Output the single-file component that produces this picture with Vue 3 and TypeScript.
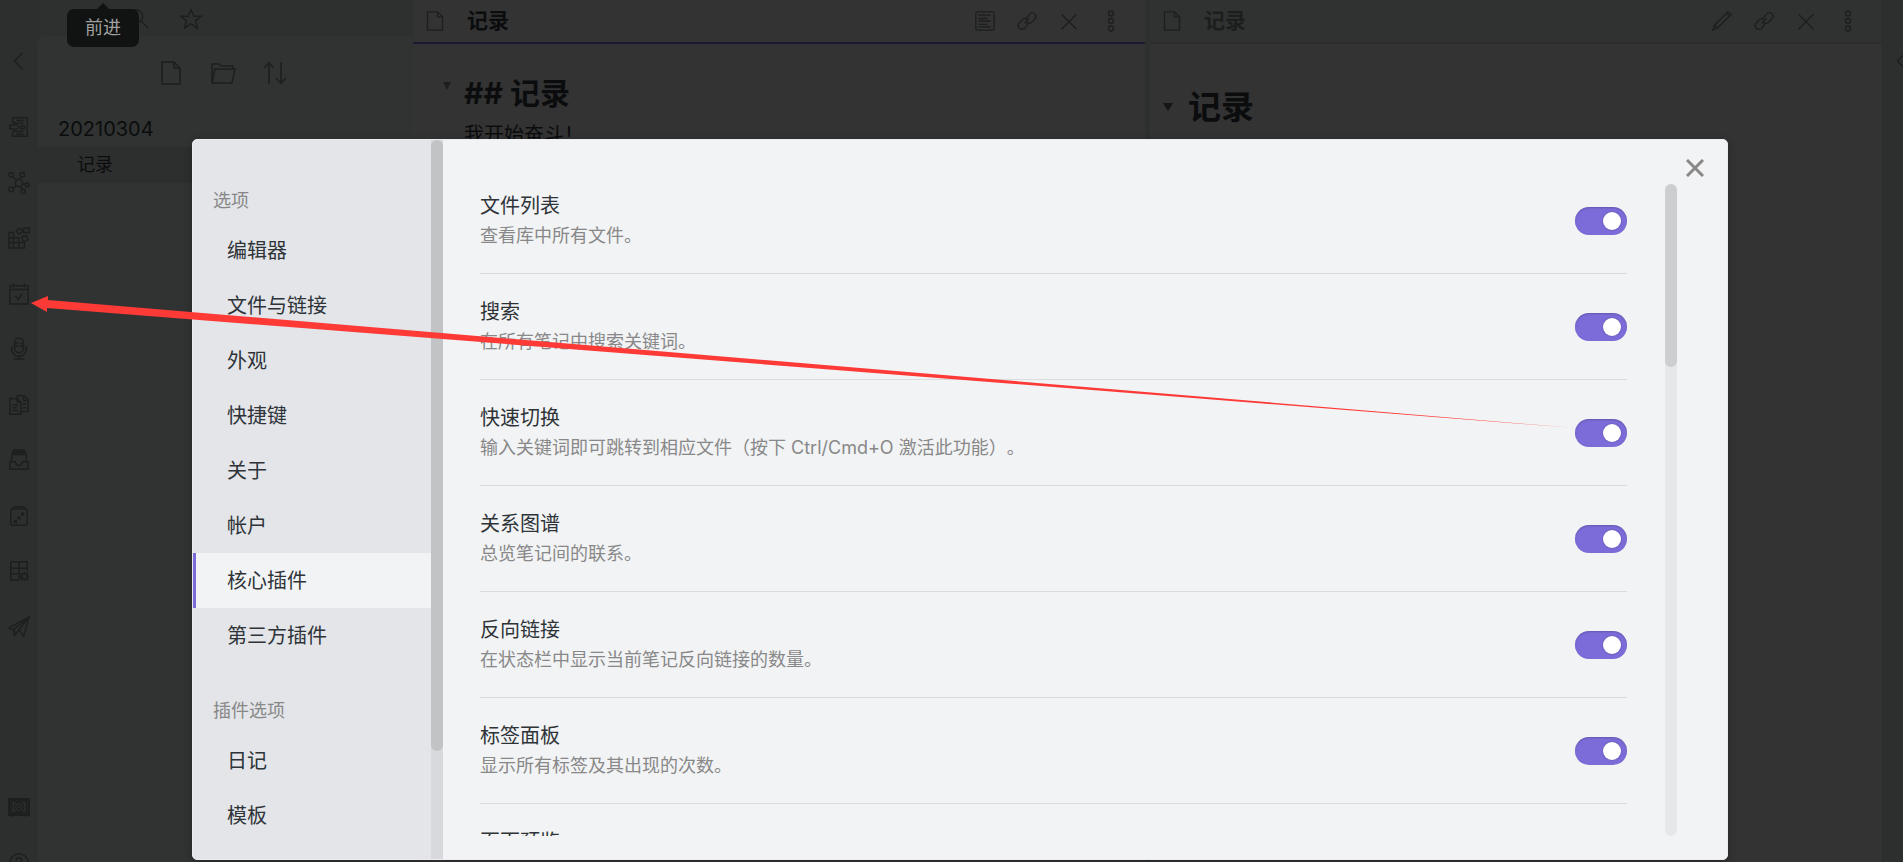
<script setup lang="ts">
import { ref } from 'vue'

interface Plugin {
  name: string
  desc: string
  on: boolean
}

const groups = [
  { title: '选项', items: ['编辑器', '文件与链接', '外观', '快捷键', '关于', '帐户', '核心插件', '第三方插件'] },
  { title: '插件选项', items: ['日记', '模板'] },
]
const current = ref('核心插件')

const plugins = ref<Plugin[]>([
  { name: '文件列表', desc: '查看库中所有文件。', on: true },
  { name: '搜索', desc: '在所有笔记中搜索关键词。', on: true },
  { name: '快速切换', desc: '输入关键词即可跳转到相应文件（按下 Ctrl/Cmd+O 激活此功能）。', on: true },
  { name: '关系图谱', desc: '总览笔记间的联系。', on: true },
  { name: '反向链接', desc: '在状态栏中显示当前笔记反向链接的数量。', on: true },
  { name: '标签面板', desc: '显示所有标签及其出现的次数。', on: true },
  { name: '页面预览', desc: '', on: true },
])

// Stroke outlines on a 24 × 24 grid
const icons: Record<string, string> = {
  back: 'M16 3L7 12l9 9',
  switcher: 'M5 8V2h16v20H5v-6M9 5h8M9 8h8M14 11h4v3h-4zM9 17h8M9 20h8M2 10h5V7l5 5-5 5v-3H2z',
  graph: 'M8 12a4 4 0 1 0 8 0 4 4 0 1 0-8 0M1 3a2 2 0 1 0 5 0 2 2 0 1 0-5 0M13 3a2 2 0 1 0 5 0 2 2 0 1 0-5 0M19 14a2 2 0 1 0 4 0 2 2 0 1 0-4 0M14 21a2 2 0 1 0 5 0 2 2 0 1 0-5 0M1 19a2 2 0 1 0 5 0 2 2 0 1 0-5 0M5 5l4 4M15 5l-2 3M16 13h3M14 16l2 3M9 15l-4 3',
  blocks: 'M1 6h5v17H1zM1 12h11v11M1 17h17v6H1M6 12v11M12 12v11M9 4l4-3 3 4-4 3zM17 1h6v5h-6zM15 11l5-2 2 5-5 2z',
  calendar: 'M2 3h20v20H2zM2 7h20M6 1v4M18 1v4M8 14l3 4 5-7M5 1h2M17 1h2',
  mic: 'M7 5a5 5 0 0 1 10 0v6a5 5 0 0 1-10 0zM4 9v3a8 8 0 0 0 16 0V9M12 20v3M6 23h12M7 6h4M7 9h4M13 6h4M13 9h4',
  copy: 'M2 5h8l4 4v13H2zM10 5v4h4M10 5V2h8l4 4v13h-8M17 2v5h5M5 12h6M5 15h5M5 18h6M16 11h4M16 15h4',
  inbox: 'M2 14h6q1 4 4 4t4-4h6v8H2zM4 14V6h16v8M5 6V3h14v3M5 1h14M5 4h14',
  dice: 'M3 6q0-2 2-2h14q2 0 2 2v14q0 2-2 2H5q-2 0-2-2zM4 5l3-3h10l3 3M15 9h2v2h-2zM11 13h2v2h-2zM7 17h2v2H7z',
  table: 'M3 2h18v10M12 22H3V2M3 9h18M3 15h11M12 2v20M15 18a3 3 0 1 0 6 0 3 3 0 1 0-6 0M18 13v2M18 21v2M13 18h2M21 18h2M14 14l2 2M20 20l2 2M22 14l-2 2M14 22l2-2',
  plane: 'M1 13L23 1l-6 21-5-7-5 6-1-6zM23 1L6 15M23 1L12 15M7 21v-5',
  vault: 'M1 3h22v18H1zM4 6h16v12H4zM7 12a5 5 0 1 0 10 0 5 5 0 1 0-10 0M10 12a2 2 0 1 0 4 0 2 2 0 1 0-4 0M4 21v2M20 21v2M2 4h20v16H2z',
  help: 'M2 12a10 10 0 1 0 20 0 10 10 0 1 0-20 0M9 9a3 3 0 1 1 4 3q-1 1-1 3M12 18v1',
  file: 'M3 1h12l6 6v16H3zM15 1v6h6',
  folder: 'M1 22V3h7l2 2h12v3M1 22L4 8h20l-3 14z',
  sort: 'M6 23V2M1 7l5-5 5 5M18 1v21M13 17l5 5 5-5',
  search: 'M2 9a7 7 0 1 0 14 0 7 7 0 1 0-14 0M14 14l8 8',
  star: 'M12 2l3 7h8l-6 5 2 8-7-5-7 5 2-8-6-5h8z',
  preview: 'M1 3q0-2 2-2h18q2 0 2 2v18q0 2-2 2H3q-2 0-2-2zM4 5h15M4 9h11M4 12h15M4 16h11M4 19h15',
  link: 'M10 10l5-6q3-4 7 0 2 3-1 6l-4 4q-3 2-6-1M14 14l-4 6q-4 4-8 0-2-3 1-6l4-4q3-2 6 1M9 15l6-6',
  cross: 'M3 4l18 18M21 4L3 22',
  dots: 'M9 3a3 3 0 1 0 6 0 3 3 0 1 0-6 0M9 12a3 3 0 1 0 6 0 3 3 0 1 0-6 0M9 21a3 3 0 1 0 6 0 3 3 0 1 0-6 0',
  pencil: 'M1 23l2-6L19 1l4 3L7 20zM3 17l4 3M18 3l3 3',
}
const ribbon = ['switcher', 'graph', 'blocks', 'calendar', 'mic', 'copy', 'inbox', 'dice', 'table', 'plane']
const leftActions = ['preview', 'link', 'cross', 'dots']
const rightActions = ['pencil', 'link', 'cross', 'dots']
</script>

<template>
  <div class="app">
    <nav class="ribbon" aria-label="功能区">
      <button class="icon collapse" aria-label="折叠"><svg viewBox="0 0 24 24"><path :d="icons.back" /></svg></button>
      <div class="ribbon-main">
        <button v-for="name in ribbon" :key="name" class="icon" :aria-label="name">
          <svg viewBox="0 0 24 24"><path :d="icons[name]" /></svg>
        </button>
      </div>
      <div class="ribbon-end">
        <button class="icon" aria-label="vault"><svg viewBox="0 0 24 24"><path :d="icons.vault" /></svg></button>
        <button class="icon" aria-label="help"><svg viewBox="0 0 24 24"><path :d="icons.help" /></svg></button>
      </div>
    </nav>

    <aside class="explorer">
      <div class="tabs">
        <button class="icon tab" aria-label="文件列表"><svg viewBox="0 0 24 24"><path :d="icons.folder" /></svg></button>
        <button class="icon tab" aria-label="搜索"><svg viewBox="0 0 24 24"><path :d="icons.search" /></svg></button>
        <button class="icon tab" aria-label="星标"><svg viewBox="0 0 24 24"><path :d="icons.star" /></svg></button>
        <div class="tooltip" role="tooltip">前进</div>
      </div>
      <div class="files">
        <div class="tools">
          <button class="icon" aria-label="新建笔记"><svg viewBox="0 0 24 24"><path :d="icons.file" /></svg></button>
          <button class="icon" aria-label="新建文件夹"><svg viewBox="0 0 24 24"><path :d="icons.folder" /></svg></button>
          <button class="icon" aria-label="排序"><svg viewBox="0 0 24 24"><path :d="icons.sort" /></svg></button>
        </div>
        <a class="entry" href="#">20210304</a>
        <a class="entry active" href="#">记录</a>
      </div>
    </aside>

    <section class="pane focused">
      <header>
        <svg class="glyph" viewBox="0 0 24 24"><path :d="icons.file" /></svg>
        <span class="name">记录</span>
        <button v-for="name in leftActions" :key="name" class="icon" :aria-label="name">
          <svg viewBox="0 0 24 24"><path :d="icons[name]" /></svg>
        </button>
      </header>
      <div class="doc source">
        <h2><span class="fold"></span>## 记录</h2>
        <p>我开始奋斗！</p>
      </div>
    </section>

    <section class="pane">
      <header>
        <svg class="glyph" viewBox="0 0 24 24"><path :d="icons.file" /></svg>
        <span class="name">记录</span>
        <button v-for="name in rightActions" :key="name" class="icon" :aria-label="name">
          <svg viewBox="0 0 24 24"><path :d="icons[name]" /></svg>
        </button>
      </header>
      <div class="doc reading">
        <h2><span class="fold"></span>记录</h2>
      </div>
    </section>

    <div class="ribbon right">
      <button class="icon collapse" aria-label="展开"><svg viewBox="0 0 24 24"><path :d="icons.back" /></svg></button>
    </div>

    <div class="overlay">
      <div class="modal" role="dialog" aria-label="设置">
        <div class="menu">
          <nav>
            <div v-for="g in groups" :key="g.title" class="group">
              <div class="group-title">{{ g.title }}</div>
              <button
                v-for="item in g.items"
                :key="item"
                :class="['item', { selected: item === current }]"
                @click="current = item"
              >{{ item }}</button>
            </div>
          </nav>
          <div class="track"><div class="thumb"></div></div>
        </div>
        <div class="content">
          <button class="close" aria-label="关闭">
            <svg viewBox="0 0 18 18"><path d="M1 1l16 16M17 1L1 17" /></svg>
          </button>
          <div class="scroller">
            <div class="list">
              <label v-for="p in plugins" :key="p.name" class="row">
                <span class="info">
                  <span class="title">{{ p.name }}</span>
                  <span class="desc">{{ p.desc }}</span>
                </span>
                <input v-model="p.on" type="checkbox" class="toggle" />
              </label>
            </div>
            <div class="track"><div class="thumb"></div></div>
          </div>
        </div>
      </div>
    </div>

    <svg class="arrow" viewBox="0 0 1903 862" aria-hidden="true">
      <path d="M31 303L48 296V300L1575 428L47 308V312Z" />
    </svg>
  </div>
</template>

<style>
body {
  margin: 0;
}
</style>

<style scoped>
.app {
  position: relative;
  display: flex;
  height: 100vh;
  overflow: hidden;
  background: #2e302f;
  color: #0b0c0d;
  font-family: Inter, "Noto Sans CJK SC", sans-serif;
  font-size: 20px;
  font-weight: 400;
  text-spacing-trim: space-all;
}
button {
  padding: 0;
  border: 0;
  background: none;
  font: inherit;
  color: inherit;
}
.icon {
  display: block;
  flex: none;
  width: 22px;
  height: 22px;
}
.icon svg,
.glyph {
  display: block;
  width: 100%;
  height: 100%;
  flex: none;
  overflow: visible;
  fill: none;
  stroke: #1d1f1e;
  stroke-width: 1.6;
}
.ribbon {
  display: flex;
  flex: none;
  flex-direction: column;
  align-items: center;
  box-sizing: border-box;
  width: 38px;
  padding-top: 50px;
  background: #2d2f2e;
}
.ribbon-main {
  display: flex;
  flex-direction: column;
  justify-content: space-between;
  height: 522px;
  margin-top: 44px;
}
.ribbon-end {
  display: flex;
  flex-direction: column;
  gap: 34px;
  margin-top: auto;
  margin-bottom: -12px;
}
.ribbon.right {
  width: 20px;
  align-items: flex-start;
  padding-left: 8px;
}
.explorer {
  display: flex;
  flex: none;
  flex-direction: column;
  width: 375px;
}
.tabs {
  position: relative;
  display: flex;
  box-sizing: border-box;
  height: 36px;
  padding: 8px 0 0 38px;
  gap: 30px;
}
.tooltip {
  position: absolute;
  top: 9px;
  left: 29px;
  width: 72px;
  border-radius: 7px;
  background: #111312;
  color: #a0a0a0;
  font-size: 18px;
  line-height: 38px;
  text-align: center;
}
.tooltip::before {
  content: "";
  position: absolute;
  top: -6px;
  left: 30px;
  border: 6px solid transparent;
  border-top: 0;
  border-bottom-color: #111312;
}
.files {
  flex: 1;
  border-top-left-radius: 8px;
  background: #313332;
}
.tools {
  display: flex;
  justify-content: center;
  gap: 28px;
  height: 75px;
  padding-top: 25px;
  padding-right: 6px;
  box-sizing: border-box;
}
.tools .icon {
  width: 24px;
  height: 24px;
}
.entry {
  display: block;
  padding-left: 20px;
  color: inherit;
  line-height: 36px;
  text-decoration: none;
}
.entry.active {
  padding-left: 39px;
  background: #2d2f2e;
  font-size: 18px;
}
.pane {
  flex: 1;
  min-width: 0;
  margin-right: 5px;
  background: #333333;
}
.pane + .pane {
  margin-right: 0;
  border-right: 1px solid #2b2c2c;
}
.pane header {
  display: flex;
  align-items: center;
  gap: 22px;
  height: 42px;
  padding-left: 12px;
  padding-right: 24px;
  border-bottom: 2px solid #2c2e2d;
  background: #303231;
  color: #1c1e1d;
}
.pane.focused header {
  border-color: #1d1933;
  background: #333333;
  color: #0b0c0d;
}
.pane header .icon,
.glyph {
  width: 20px;
  height: 20px;
}
.name {
  flex: 1;
  font-weight: 700;
  font-size: 21px;
  line-height: 42px;
}
.doc {
  padding-left: 51px;
}
.doc h2 {
  position: relative;
  margin: 0;
  font-size: 30px;
  font-weight: 700;
  line-height: 40px;
}
.doc p {
  margin: 0;
  line-height: 44px;
}
.source {
  padding-top: 29px;
}
.reading {
  padding-left: 38px;
  padding-top: 39px;
}
.reading h2 {
  font-size: 33px;
  line-height: 48px;
}
.fold {
  position: absolute;
  top: 9px;
  left: -21px;
  border: 4px solid transparent;
  border-top: 8px solid #1c1e1d;
  border-bottom: 0;
}
.reading .fold {
  top: 20px;
  left: -25px;
  border-left-width: 5px;
  border-right-width: 5px;
  border-top-color: #141515;
}
.overlay {
  position: absolute;
  inset: 0;
  box-sizing: border-box;
  padding: 139px 175px 2px 192px;
}
.modal {
  display: flex;
  box-sizing: border-box;
  height: 100%;
  overflow: hidden;
  border: 1px solid #ebecef;
  border-radius: 5px;
  background: #f2f3f5;
  color: #2e3338;
  box-shadow: 0 2px 8px rgba(0, 0, 0, 0.25);
}
.menu {
  display: flex;
  flex: none;
  width: 250px;
  background: #e3e5e8;
}
.menu nav {
  flex: 1;
  padding-top: 13px;
}
.group {
  padding-top: 36px;
}
.group-title {
  padding: 0 0 10px 20px;
  color: #888888;
  font-size: 18px;
  line-height: 24px;
}
.item {
  display: block;
  box-sizing: border-box;
  width: 100%;
  height: 55px;
  padding-left: 31px;
  border-left: 3px solid transparent;
  line-height: 57px;
  text-align: left;
}
.item.selected {
  border-left-color: #7b6cd9;
  background: #f2f3f5;
}
.track {
  flex: none;
  width: 12px;
}
.thumb {
  border-radius: 6px;
}
.menu .track {
  background: #d8d9dd;
}
.menu .thumb {
  height: 85%;
  background: #c2c3c5;
}
.content {
  position: relative;
  display: flex;
  flex: 1;
  min-width: 0;
  box-sizing: border-box;
  padding: 44px 50px 23px 37px;
}
.close {
  position: absolute;
  top: 19px;
  right: 23px;
  width: 18px;
  height: 18px;
}
.close svg {
  display: block;
  fill: none;
  stroke: #888888;
  stroke-width: 3;
}
.scroller {
  display: flex;
  flex: 1;
  gap: 38px;
  overflow: hidden;
}
.scroller .track {
  border-radius: 6px;
  background: #e6e7e9;
}
.scroller .thumb {
  height: 28%;
  background: #cdced0;
}
.list {
  flex: 1;
}
.row {
  display: flex;
  align-items: center;
  padding: 23px 0;
  border-bottom: 1px solid #dadbdd;
}
.row:first-child {
  padding-top: 7px;
}
.info {
  flex: 1;
}
.title,
.desc {
  display: block;
  line-height: 31px;
}
.desc {
  min-height: 28px;
  color: #888888;
  font-size: 18px;
  line-height: 28px;
}
.toggle {
  appearance: none;
  display: flex;
  align-items: center;
  justify-content: flex-start;
  box-sizing: border-box;
  width: 52px;
  height: 28px;
  margin: 0;
  padding: 0 6px;
  border-radius: 14px;
  background: #b5b5b5;
  box-shadow: inset 0 1px 2px rgba(0, 0, 0, 0.2);
}
.toggle::before {
  content: "";
  width: 18px;
  height: 18px;
  border-radius: 50%;
  background: #ffffff;
  box-shadow: 0 0 2px rgba(0, 0, 0, 0.3);
}
.toggle:checked {
  justify-content: flex-end;
  background: #7b6cd9;
}
.arrow {
  position: absolute;
  top: 0;
  left: 0;
  width: 100%;
  fill: #fe3a37;
  pointer-events: none;
}
</style>
